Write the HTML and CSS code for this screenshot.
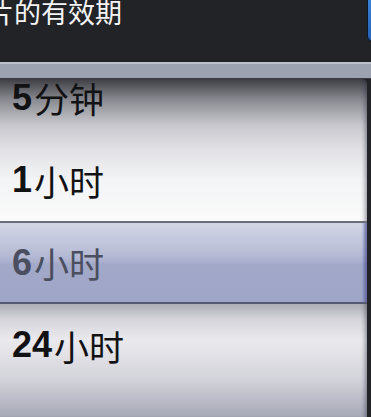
FILE: index.html
```html
<!DOCTYPE html>
<html lang="zh-CN">
<head>
<meta charset="utf-8">
<title>有效期</title>
<link rel="stylesheet" href="styles.css">
</head>
<body>
<div class="screen">
  <header class="topbar">
    <h1 class="title">图片的有效期</h1>
    <span class="done-btn"></span>
  </header>
  <div class="strip"></div>
  <div class="wheel">
    <div class="band"></div>
    <ul class="rows">
      <li class="row"><b>5</b>分钟</li>
      <li class="row"><b>1</b>小时</li>
      <li class="row selected"><b>6</b>小时</li>
      <li class="row"><b>24</b>小时</li>
    </ul>
  </div>
</div>
</body>
</html>
```
FILE: styles.css
```css
html, body {
  margin: 0;
  padding: 0;
  background: #222326;
  overflow: hidden;
}
.screen {
  width: 371px;
  height: 417px;
  overflow: hidden;
  display: flex;
  flex-direction: column;
  font-family: "Liberation Sans", "Noto Sans CJK SC", sans-serif;
}
.topbar {
  height: 62px;
  flex: none;
  display: flex;
  justify-content: space-between;
  align-items: flex-start;
  background: #222326;
  overflow: hidden;
}
.title {
  margin: 0 0 0 -40px;
  font-family: "Noto Sans CJK SC", sans-serif;
  font-weight: 400;
  font-size: 27px;
  line-height: 27px;
  color: #f4f4f6;
  white-space: nowrap;
  transform: translateY(-2px);
}
.done-btn {
  flex: none;
  width: 40px;
  height: 42px;
  margin-right: -36px;
  box-sizing: border-box;
  border: 1px solid #0e1a2c;
  border-top: none;
  border-radius: 0 0 6px 6px;
  background: linear-gradient(#3a82d8, #2461b4);
}
.strip {
  height: 17px;
  flex: none;
  box-sizing: border-box;
  border-top: 2px solid #bcc0ca;
  border-bottom: 1px solid #3a3b42;
  background: #9ca2b0;
}
.wheel {
  position: relative;
  flex: 1;
  margin-right: 4px;
  overflow: hidden;
  border-top-right-radius: 5px;
  background: linear-gradient(
    #3e3e44 0px,
    #8a8a92 21px,
    #c8c8ce 46px,
    #e2e2e6 71px,
    #f3f4f6 101px,
    #fafafa 140px,
    #fafafa 143px,
    #aeaeb6 226px,
    #d4d4da 240px,
    #eaeaee 261px,
    #d2d2da 301px,
    #a6a8b6 338px
  );
  box-shadow: inset -5px 0 4px -3px rgba(40, 40, 60, 0.45);
}
.band {
  position: absolute;
  left: 0;
  right: 0;
  top: 142px;
  height: 83px;
  box-sizing: border-box;
  border-top: 2px solid #6c6e78;
  border-bottom: 2px solid #555972;
  background: linear-gradient(
    #d3d6e5 0%,
    #b6bbd5 40%,
    #aab0ce 49%,
    #a2a8c8 52%,
    #9fa5c6 100%
  );
  box-shadow: inset -5px 0 3px -2px rgba(80, 84, 150, 0.7);
}
.rows {
  position: relative;
  z-index: 1;
  list-style: none;
  margin: -22.75px 0 0 0;
  padding: 0;
}
.row {
  height: 82.5px;
  display: flex;
  align-items: center;
  padding-left: 12px;
  font-family: "Noto Sans CJK SC", sans-serif;
  font-size: 35px;
  line-height: 1;
  color: #121214;
}
.row b {
  font-family: "Liberation Sans", sans-serif;
  font-size: 36px;
  font-weight: 700;
  margin-right: 2px;
}
.row.selected {
  color: #4a4e5e;
}
```
